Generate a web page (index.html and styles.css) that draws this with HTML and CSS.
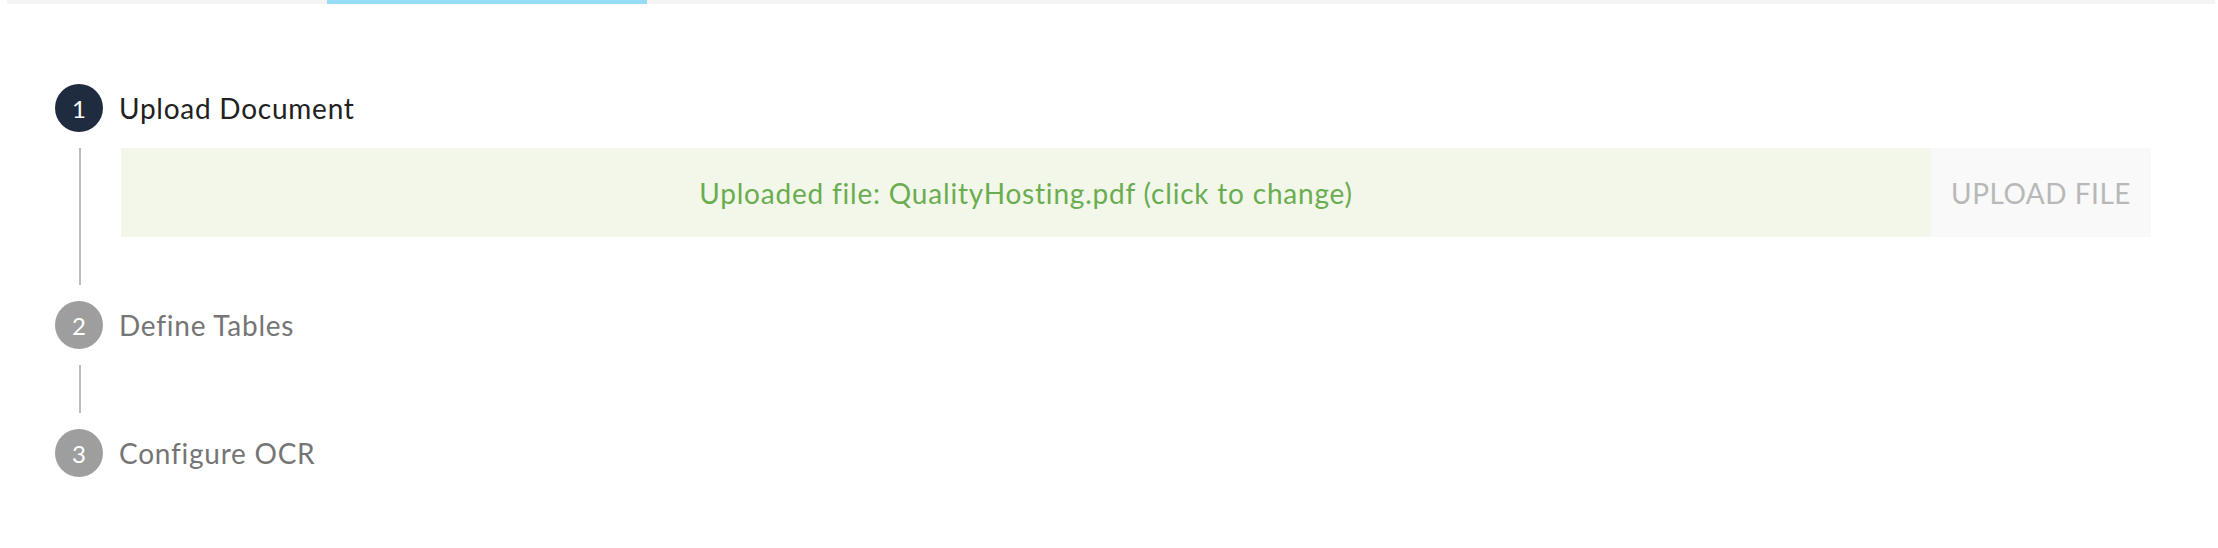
FILE: index.html
```html
<!DOCTYPE html>
<html lang="en">
<head>
<meta charset="utf-8">
<title>Upload Document</title>
<link rel="stylesheet" href="styles.css">
</head>
<body>
<div class="progress"><div class="progress-fill"></div></div>
<div class="stepper">
  <div class="step">
    <div class="step-label active">
      <span class="step-icon">1</span>
      <span class="step-text">Upload Document</span>
    </div>
    <div class="step-content">
      <div class="upload">
        <div class="upload-info">Uploaded file: QualityHosting.pdf (click to change)</div>
        <div class="upload-btn">UPLOAD FILE</div>
      </div>
    </div>
  </div>
  <div class="step">
    <div class="step-label">
      <span class="step-icon">2</span>
      <span class="step-text">Define Tables</span>
    </div>
  </div>
  <div class="connector"></div>
  <div class="step">
    <div class="step-label">
      <span class="step-icon">3</span>
      <span class="step-text">Configure OCR</span>
    </div>
  </div>
</div>
</body>
</html>
```
FILE: styles.css
```css
html, body {
  margin: 0;
  background: #ffffff;
  font-family: "Lato", "Open Sans", sans-serif;
}
.progress {
  margin: 0 3px 0 7px;
  height: 4px;
  background: #f4f4f4;
}
.progress-fill {
  margin-left: 320px;
  width: 320px;
  height: 4px;
  background: #97dbf7;
}
.stepper {
  padding: 64px 67px 0 55px;
}
.step-label {
  display: flex;
  align-items: center;
  padding: 16px 0;
}
.step-icon {
  width: 48px;
  height: 48px;
  border-radius: 50%;
  background: #9e9e9e;
  color: #ffffff;
  display: flex;
  align-items: center;
  justify-content: center;
  font-size: 24px;
  flex: none;
}
.step-label.active .step-icon {
  background: #1f2b3e;
}
.step-text {
  padding-left: 16px;
  font-size: 28px;
  letter-spacing: 0.75px;
  color: #757575;
}
.step-label.active .step-text {
  color: #212121;
}
.step-content {
  margin-left: 24px;
  border-left: 2px solid #bdbdbd;
  padding: 0 0 48px 40px;
}
.upload {
  display: flex;
  height: 89px;
}
.upload-info {
  flex: 1;
  background: #f3f7ea;
  color: #6aad50;
  font-size: 28px;
  letter-spacing: 0.8px;
  display: flex;
  align-items: center;
  justify-content: center;
}
.upload-btn {
  width: 220px;
  background: #f9f9f9;
  color: #b8b8b8;
  font-size: 28px;
  letter-spacing: 0.5px;
  display: flex;
  align-items: center;
  justify-content: center;
}
.connector {
  margin-left: 24px;
  border-left: 2px solid #bdbdbd;
  height: 48px;
}
```
